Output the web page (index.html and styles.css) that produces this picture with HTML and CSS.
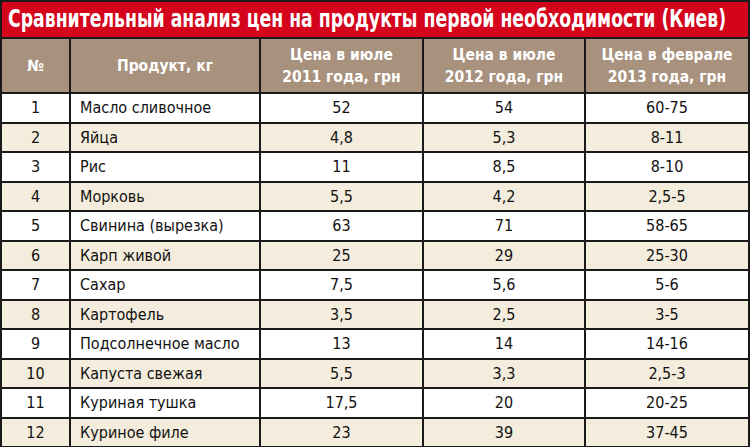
FILE: index.html
```html
<!DOCTYPE html>
<html lang="ru">
<head>
<meta charset="utf-8">
<title>Сравнительный анализ цен</title>
<link rel="stylesheet" href="styles.css">
</head>
<body>
<div class="frame">
  <div class="title"><span class="title-text">Сравнительный анализ цен на продукты первой необходимости (Киев)</span></div>
  <table class="prices">
    <colgroup>
      <col class="c-num"><col class="c-name"><col class="c-p1"><col class="c-p2"><col class="c-p3">
    </colgroup>
    <thead>
      <tr>
        <th>№</th>
        <th>Продукт, кг</th>
        <th>Цена в июле<br>2011 года, грн</th>
        <th>Цена в июле<br>2012 года, грн</th>
        <th>Цена в феврале<br>2013 года, грн</th>
      </tr>
    </thead>
    <tbody>
      <tr><td>1</td><td class="name">Масло сливочное</td><td>52</td><td>54</td><td>60-75</td></tr>
      <tr class="alt"><td>2</td><td class="name">Яйца</td><td>4,8</td><td>5,3</td><td>8-11</td></tr>
      <tr><td>3</td><td class="name">Рис</td><td>11</td><td>8,5</td><td>8-10</td></tr>
      <tr class="alt"><td>4</td><td class="name">Морковь</td><td>5,5</td><td>4,2</td><td>2,5-5</td></tr>
      <tr><td>5</td><td class="name">Свинина (вырезка)</td><td>63</td><td>71</td><td>58-65</td></tr>
      <tr class="alt"><td>6</td><td class="name">Карп живой</td><td>25</td><td>29</td><td>25-30</td></tr>
      <tr><td>7</td><td class="name">Сахар</td><td>7,5</td><td>5,6</td><td>5-6</td></tr>
      <tr class="alt"><td>8</td><td class="name">Картофель</td><td>3,5</td><td>2,5</td><td>3-5</td></tr>
      <tr><td>9</td><td class="name">Подсолнечное масло</td><td>13</td><td>14</td><td>14-16</td></tr>
      <tr class="alt"><td>10</td><td class="name">Капуста свежая</td><td>5,5</td><td>3,3</td><td>2,5-3</td></tr>
      <tr><td>11</td><td class="name">Куриная тушка</td><td>17,5</td><td>20</td><td>20-25</td></tr>
      <tr class="alt"><td>12</td><td class="name">Куриное филе</td><td>23</td><td>39</td><td>37-45</td></tr>
    </tbody>
  </table>
</div>
</body>
</html>
```
FILE: styles.css
```css
html, body {
  margin: 0;
  padding: 0;
  background: #ffffff;
}
.frame {
  width: 750px;
  height: 447px;
  box-sizing: border-box;
  border: 2px solid #1a1a1a;
  border-bottom: none;
  font-family: "DejaVu Sans Condensed", "Liberation Sans", sans-serif;
  overflow: hidden;
}
.title {
  height: 35px;
  background: #d3041c;
  color: #ffffff;
  font-weight: bold;
  font-size: 24px;
  line-height: 35px;
  padding-left: 6px;
  white-space: nowrap;
  overflow: hidden;
}
.title-text {
  display: inline-block;
  transform: scaleX(0.8);
  transform-origin: 0 50%;
}
.prices {
  width: 746px;
  border-collapse: collapse;
  table-layout: fixed;
  border-top: 2px solid #1a1a1a;
}
.c-num { width: 68px; }
.c-name { width: 190px; }
.c-p1 { width: 163px; }
.c-p2 { width: 162px; }
.c-p3 { width: 163px; }
.prices th {
  background: #a8917d;
  color: #ffffff;
  font-weight: bold;
  font-size: 15.5px;
  line-height: 22px;
  height: 53px;
  padding: 0;
  text-align: center;
  border-left: 2px solid #1a1a1a;
  border-bottom: 2px solid #1a1a1a;
  white-space: nowrap;
}
.prices td {
  height: 27.5px;
  padding: 0;
  font-size: 16px;
  color: #111111;
  text-align: center;
  white-space: nowrap;
  border-left: 2px solid #1a1a1a;
  border-bottom: 2px solid #1a1a1a;
}
.prices th:first-child,
.prices td:first-child {
  border-left: none;
}
.prices td.name {
  text-align: left;
  padding-left: 9px;
}
.prices tr.alt td {
  background: #f4ecdc;
}
```
